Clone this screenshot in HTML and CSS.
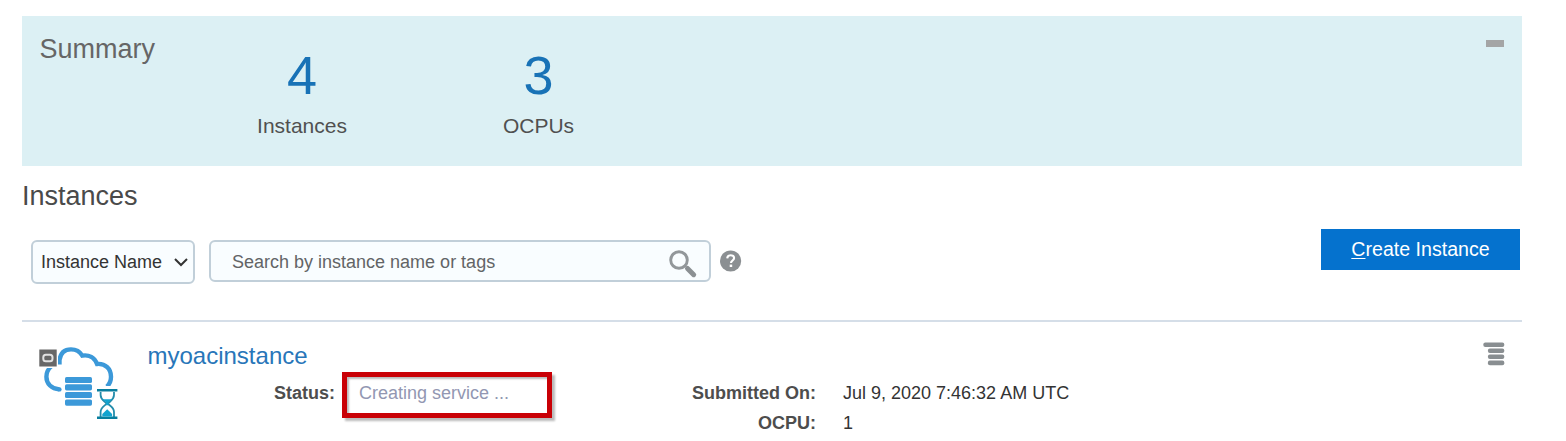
FILE: index.html
```html
<!DOCTYPE html>
<html lang="en">
<head>
<meta charset="utf-8">
<title>Instances</title>
<link rel="stylesheet" href="styles.css">
</head>
<body>
<main class="page">
  <section class="summary">
    <h2 class="summary-title">Summary</h2>
    <div class="metric"><span class="metric-value">4</span><span class="metric-label">Instances</span></div>
    <div class="metric"><span class="metric-value">3</span><span class="metric-label">OCPUs</span></div>
    <button class="collapse" aria-label="Collapse summary"></button>
  </section>

  <h2 class="heading">Instances</h2>

  <div class="toolbar">
    <div class="select"><span>Instance Name</span>
      <svg width="14" height="10" viewBox="0 0 14 10"><path d="M1 2l6 6 6-6" fill="none" stroke="#333" stroke-width="2"/></svg>
    </div>
    <div class="search"><span class="search-hint">Search by instance name or tags</span>
      <svg width="30" height="30" viewBox="0 0 30 30"><circle cx="11" cy="11" r="8.3" fill="none" stroke="#92979a" stroke-width="2.9"/><path d="M19.5 19.5l6.2 6.2" stroke="#8b9093" stroke-width="5" stroke-linecap="round"/></svg>
    </div>
    <svg class="help" width="22" height="22" viewBox="0 0 22 22"><circle cx="10.6" cy="11" r="10.6" fill="#8b8f92"/><path d="M7.2 8.3C7.4 6.2 8.8 5.2 10.7 5.2c2 0 3.4 1.1 3.4 2.9 0 2.5-3.1 2.4-3.1 5" fill="none" stroke="#fff" stroke-width="2.1"/><rect x="9.7" y="14.6" width="2.5" height="2.4" fill="#fff"/></svg>
    <button class="create"><span><u>C</u>reate Instance</span></button>
  </div>

  <article class="instance">
    <svg class="service-icon" width="84" height="78" viewBox="0 0 84 78">
      <path d="M21.5 17.5V13C22.5 6 26.5 2.4 33 2.4C37.5 2.4 41.8 4.4 44.3 8.6C51 7.4 56.5 10.6 59 17C67.5 16.2 73 22 73 29.7C73 34 71.5 37.3 68.8 39.6M13.2 19.4C10.2 22 8.4 25.6 8.4 29.7C8.4 36.8 13.5 41.8 21.4 42.4" fill="none" stroke="#3c99d9" stroke-width="4.4"/>
      <circle cx="21.4" cy="42.4" r="2.2" fill="#3c99d9"/>
      <path d="M0 1.4h20v19.6H0z" fill="#fff"/>
      <rect x="1.3" y="2.5" width="17.4" height="17" fill="#676767"/>
      <rect x="5.3" y="7.8" width="9.2" height="6.4" rx="2.5" fill="none" stroke="#e1e1e1" stroke-width="2"/>
      <g fill="#3c99d9"><rect x="27" y="30" width="27" height="6.1" rx="1.6"/><rect x="27" y="37.3" width="27" height="6.1" rx="1.6"/><rect x="27" y="45" width="27" height="6.1" rx="1.6"/><rect x="27" y="52.4" width="27" height="6.3" rx="1.6"/></g>
      <path d="M57 39h24v5H57z" fill="#fff"/>
      <path d="M62.6 45V48C62.6 53 67 54.3 68.6 56.7 67 58.7 62.6 60 62.6 65V70M76 45V48C76 53 71.6 54.3 69.8 56.7 71.6 58.7 76 60 76 65V70" fill="none" stroke="#238cab" stroke-width="1.8"/>
      <path d="M59 43.3h20.4M59 70.7h20.4" stroke="#087e9e" stroke-width="2.6"/>
      <path d="M64.2 52.2h10l-3.7 3v3h-2.4v-3zM69.2 62.3l4.9 4.7v2.4h-9.8v-2.4z" fill="#12a3cf"/>
    </svg>
    <div class="details">
      <a class="instance-name">myoacinstance</a>
      <dl class="facts">
        <dt>Status:</dt><dd class="status">Creating service ...</dd>
        <dt>Submitted On:</dt><dd>Jul 9, 2020 7:46:32 AM UTC</dd>
        <dt class="ocpu">OCPU:</dt><dd>1</dd>
      </dl>
    </div>
    <svg class="menu" width="24" height="26" viewBox="0 0 24 26"><g fill="#898e91"><rect x="1.3" y="1.5" width="21" height="4.4" rx="2"/><rect x="5.9" y="7.6" width="16.4" height="4.4" rx="2"/><rect x="5.9" y="13.6" width="16.4" height="4.4" rx="2"/><rect x="5.9" y="19.6" width="16.4" height="4.6" rx="2"/></g></svg>
  </article>
</main>
</body>
</html>
```

FILE: styles.css
```css
* { box-sizing: border-box; }
body {
  margin: 0;
  background: #fff;
  color: #333;
  font: 18px/22px "Liberation Sans", Arial, sans-serif;
}
.page { width: 1500px; height: 441px; margin-left: 22px; padding-top: 16px; overflow: hidden; }
h2 { margin: 0; font-size: 27px; font-weight: 400; line-height: 32px; }
button { border: 0; padding: 0; font-family: inherit; }
svg { display: block; flex: none; }

.summary {
  display: grid;
  grid-template-columns: 144px 237px 236px 1fr;
  height: 150px;
  padding: 0 18px 0 17.5px;
  background: #dcf0f4;
}
.summary-title { padding-top: 17px; color: #666; }
.metric { display: flex; flex-direction: column; align-items: center; padding-top: 28px; }
.metric-value { color: #1872b6; font-size: 54px; line-height: 62px; }
.metric-label { margin-top: 8px; color: #505050; font-size: 21px; line-height: 24px; }
.collapse { justify-self: end; width: 18px; height: 7px; margin-top: 24px; background: #a4a5a5; }

.heading { margin-top: 14px; color: #4a4a4a; }

.toolbar { display: flex; align-items: flex-start; height: 92px; padding: 12px 2px 0 9px; margin-top: 16px; }
.select, .search {
  display: flex;
  align-items: center;
  border: 2px solid #c1cfd9;
  border-radius: 6px;
  background: #f9fdff;
}
.select { width: 164px; height: 44px; padding: 0 5px 0 8px; justify-content: space-between; }
.search { width: 502px; height: 42px; margin-left: 14px; padding: 0 11px 0 21px; justify-content: space-between; }
.search-hint { padding-top: 1px; color: #626466; }
.search svg { margin-top: 5px; }
.help { margin: 10px 0 0 9px; }
.create {
  width: 199px;
  height: 41px;
  margin: -11px 0 0 auto;
  padding-bottom: 2px;
  background: #0572ce;
  color: #fff;
  font-size: 19.6px;
  line-height: 24px;
}
.create u { text-underline-offset: 2px; text-decoration-thickness: 1px; }

.instance { display: flex; height: 121px; border-top: 2px solid #d5dee8; }
.service-icon { margin: 25px 0 0 16px; }
.details { flex: 1; padding: 20px 0 0 25.5px; }
.instance-name { display: block; color: #2876b9; font-size: 24px; line-height: 28px; }
.facts {
  display: grid;
  grid-template-columns: 187.5px 217px 264px 1fr;
  grid-auto-rows: 30px;
  margin: 2px 0 0;
}
dt { padding-top: 10px; color: #4d4d4d; font-weight: 700; text-align: right; }
dd { margin: 0; padding: 10px 0 0 27px; }
.ocpu { grid-column: 3; }
.status {
  width: 210px;
  height: 46px;
  margin-left: 7px;
  padding: 5px 0 0 12px;
  border: 5px solid #c90006;
  box-shadow: 3px 3px 2px #bbb, inset 2px 2px 2px #bbb;
  color: #9297b2;
}
.menu { margin: 19px 16px 0 0; }
```
